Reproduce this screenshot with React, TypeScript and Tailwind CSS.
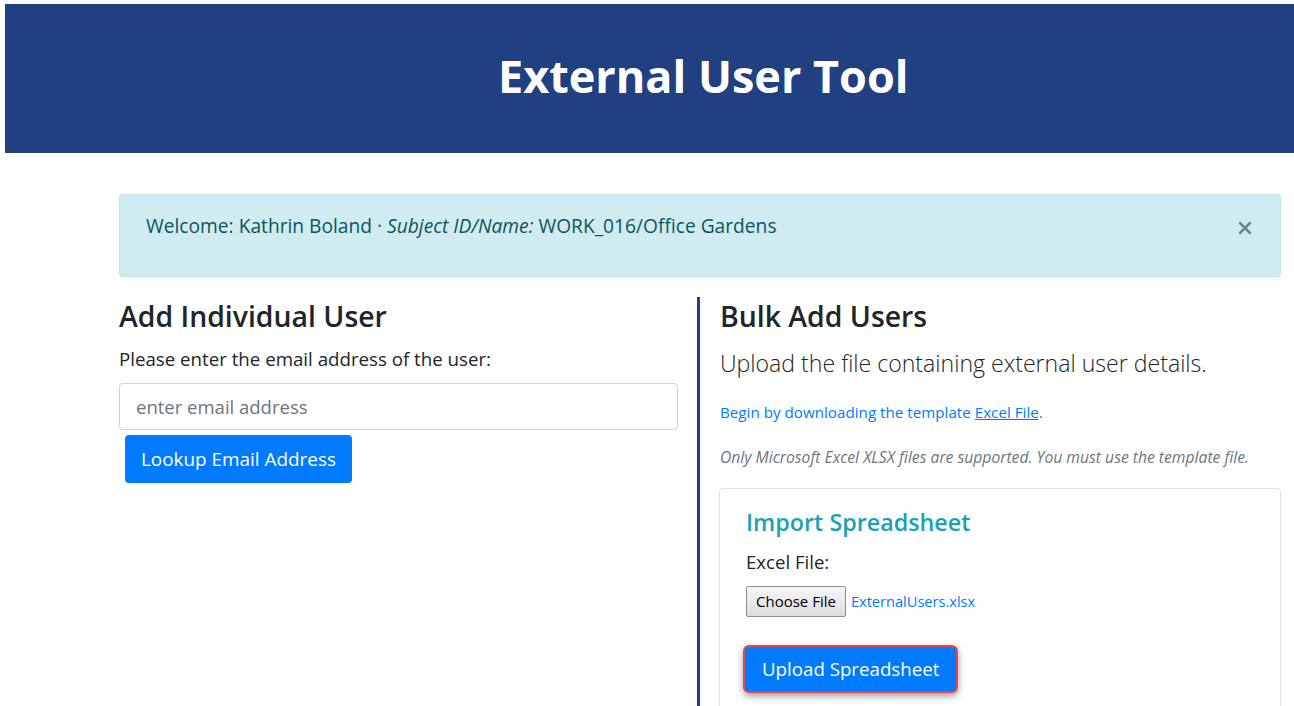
import { X } from "lucide-react";

export default function App() {
    return (
        <div className="min-h-screen bg-white pt-1 pl-[5px] font-['Open_Sans',sans-serif] text-[#212529]">
            <header className="bg-[#214082] h-[149px] flex items-center pl-[493px] pb-[7px]">
                <h1 className="text-white font-bold text-[45px] leading-none">External User Tool</h1>
            </header>

            <div className="ml-[114px] w-[1162px] mt-[41px]">
                <div className="relative bg-[#d1ecf1] border border-[#bee5eb] text-[#0c5460] rounded-sm h-[83px] pl-[26px] pt-[17px] text-[19.2px] leading-[28px]">
                    Welcome: Kathrin Boland · <i>Subject ID/Name:</i> WORK_016/Office Gardens
                    <button className="absolute right-[25px] top-[23px] text-[#5f8d95]">
                        <X size={20} strokeWidth={3} />
                    </button>
                </div>

                <div className="flex mt-5">
                    <div className="w-[578px] pr-[19px]">
                        <h3 className="text-[28.4px] font-semibold leading-[38px]">Add Individual User</h3>
                        <p className="text-[18.7px] leading-[28px] mt-[10px]">Please enter the email address of the user:</p>
                        <input
                            className="mt-[10px] w-full h-[47px] border border-[#ced4da] rounded px-4 text-[18.5px] placeholder:text-[#6c757d] outline-none"
                            placeholder="enter email address"
                        />
                        <button className="ml-[6px] mt-[5px] h-[48px] px-4 bg-[#007bff] text-white rounded text-[18.9px]">
                            Lookup Email Address
                        </button>
                    </div>

                    <div className="flex-1 border-l-[3px] border-[#214082] pl-5 pb-4">
                        <h3 className="text-[28.4px] font-semibold leading-[38px]">Bulk Add Users</h3>
                        <p className="text-[23.1px] font-light leading-[34px] mt-[11px]">Upload the file containing external user details.</p>
                        <p className="text-[15.2px] leading-[22px] text-[#007bff] mt-[21px]">
                            Begin by downloading the template <a href="#" className="underline">Excel File</a>.
                        </p>
                        <p className="text-[15.7px] leading-[22px] italic text-[#6c757d] mt-[23px]">
                            Only Microsoft Excel XLSX files are supported. You must use the template file.
                        </p>
                        <div className="mt-5 -ml-px border border-[#dee2e6] rounded px-[26px] pt-[17px] pb-6">
                            <h4 className="text-[23.3px] font-semibold leading-[32px] text-[#17a2b8]">Import Spreadsheet</h4>
                            <p className="text-[18.6px] leading-[28px] mt-[10px]">Excel File:</p>
                            <div className="flex items-center gap-[5px] mt-[10px]">
                                <button className="h-[31px] px-[9px] text-[15px] text-black border border-[#8f8f8f] rounded-[2px] bg-gradient-to-b from-[#f6f6f6] to-[#dddddd]">
                                    Choose File
                                </button>
                                <span className="text-[14.6px] text-[#007bff]">ExternalUsers.xlsx</span>
                            </div>
                            <button className="mt-[28px] -ml-[3px] h-[48px] px-[17px] bg-[#007bff] text-white text-[18.7px] rounded-md border-2 border-[#e8454c] shadow-[0_3px_7px_rgba(0,0,0,0.4)]">
                                Upload Spreadsheet
                            </button>
                        </div>
                    </div>
                </div>
            </div>
        </div>
    );
}
